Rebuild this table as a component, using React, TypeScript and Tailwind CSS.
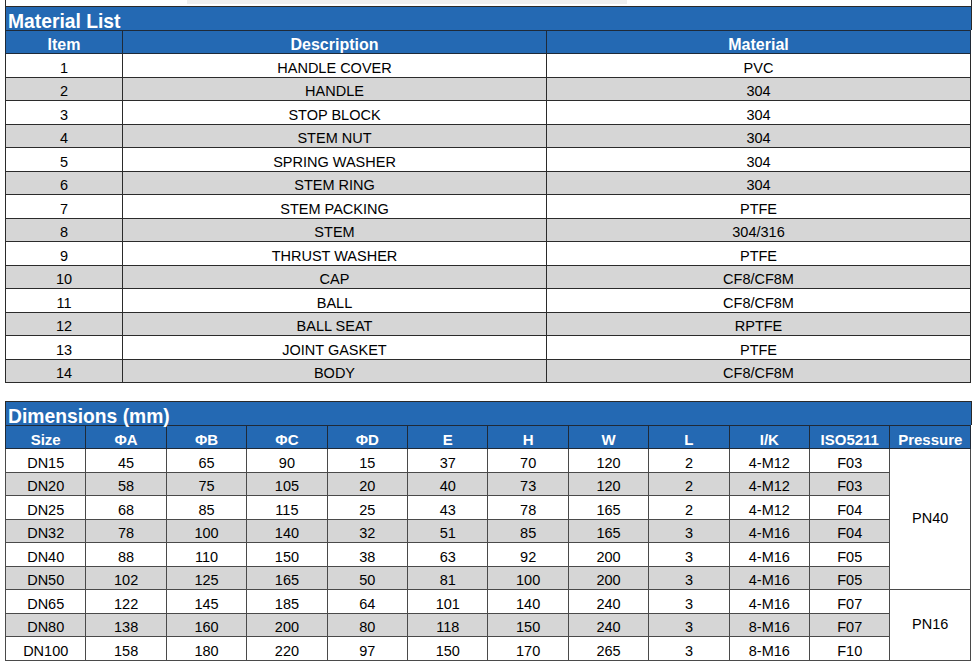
const materials = [
  ["1", "HANDLE COVER", "PVC"],
  ["2", "HANDLE", "304"],
  ["3", "STOP BLOCK", "304"],
  ["4", "STEM NUT", "304"],
  ["5", "SPRING WASHER", "304"],
  ["6", "STEM RING", "304"],
  ["7", "STEM PACKING", "PTFE"],
  ["8", "STEM", "304/316"],
  ["9", "THRUST WASHER", "PTFE"],
  ["10", "CAP", "CF8/CF8M"],
  ["11", "BALL", "CF8/CF8M"],
  ["12", "BALL SEAT", "RPTFE"],
  ["13", "JOINT GASKET", "PTFE"],
  ["14", "BODY", "CF8/CF8M"],
];

const dimHeaders = ["Size", "ΦA", "ΦB", "ΦC", "ΦD", "E", "H", "W", "L", "I/K", "ISO5211", "Pressure"];

const dims = [
  ["DN15", "45", "65", "90", "15", "37", "70", "120", "2", "4-M12", "F03"],
  ["DN20", "58", "75", "105", "20", "40", "73", "120", "2", "4-M12", "F03"],
  ["DN25", "68", "85", "115", "25", "43", "78", "165", "2", "4-M12", "F04"],
  ["DN32", "78", "100", "140", "32", "51", "85", "165", "3", "4-M16", "F04"],
  ["DN40", "88", "110", "150", "38", "63", "92", "200", "3", "4-M16", "F05"],
  ["DN50", "102", "125", "165", "50", "81", "100", "200", "3", "4-M16", "F05"],
  ["DN65", "122", "145", "185", "64", "101", "140", "240", "3", "4-M16", "F07"],
  ["DN80", "138", "160", "200", "80", "118", "150", "240", "3", "8-M16", "F07"],
  ["DN100", "158", "180", "220", "97", "150", "170", "265", "3", "8-M16", "F10"],
];

function Title({ text }: { text: string }) {
  return (
    <div className="h-[24px] bg-[#2469b3] border border-b-0 border-[#2a2a2a] flex items-end pl-[2px]">
      <span className="text-white font-bold text-[19.3px] leading-[16px]">{text}</span>
    </div>
  );
}

export default function App() {
  const cell = "h-[23.5px] align-bottom text-center text-[14.5px] leading-[16px] pb-[1px] text-black";

  return (
    <div className="w-[977px] h-[667px] bg-white overflow-hidden font-['Liberation_Sans',Arial,sans-serif]">
      <div className="px-[5px]">
        {/* tail of the block above */}
        <div className="h-[6px] border-x border-[#2a2a2a] pl-[181px]">
          <div className="w-[440px] h-[4px] bg-[#efefef]" />
        </div>

        {/* ================= MATERIAL LIST ================= */}
        <Title text="Material List" />
        <table className="w-[966px] table-fixed border-collapse">
          <colgroup>
            <col className="w-[117px]" />
            <col className="w-[424px]" />
            <col />
          </colgroup>
          <thead>
            <tr className="bg-[#2469b3]">
              {["Item", "Description", "Material"].map((h) => (
                <th
                  key={h}
                  className="h-[23px] align-bottom text-center text-white font-bold text-[16px] leading-[16px] pb-0 border border-[#1f2a38]"
                >
                  {h}
                </th>
              ))}
            </tr>
          </thead>
          <tbody>
            {materials.map((r, i) => (
              <tr key={r[0]} className={i % 2 ? "bg-[#d6d6d6]" : "bg-white"}>
                {r.map((c, j) => (
                  <td key={j} className={`${cell} border border-[#2b2b2b]`}>
                    {c}
                  </td>
                ))}
              </tr>
            ))}
          </tbody>
        </table>

        <div className="h-[18px]" />

        {/* ================= DIMENSIONS ================= */}
        <Title text="Dimensions (mm)" />
        <table className="w-[966px] table-fixed border-collapse">
          <thead>
            <tr className="bg-[#2469b3]">
              {dimHeaders.map((h) => (
                <th
                  key={h}
                  className="h-[23px] align-bottom text-center text-white font-bold text-[15px] leading-[16px] pb-0 border border-[#1f2a38]"
                >
                  {h}
                </th>
              ))}
            </tr>
          </thead>
          <tbody>
            {dims.map((r, i) => (
              <tr key={r[0]} className={i % 2 ? "bg-[#d6d6d6]" : "bg-white"}>
                {r.map((c, j) => (
                  <td key={j} className={`${cell} border border-[#4a4a4a]`}>
                    {c}
                  </td>
                ))}
                {i === 0 && (
                  <td
                    rowSpan={6}
                    className="bg-white border border-[#4a4a4a] text-center align-middle text-[14.5px] text-black"
                  >
                    PN40
                  </td>
                )}
                {i === 6 && (
                  <td
                    rowSpan={3}
                    className="bg-white border border-[#4a4a4a] text-center align-middle text-[14.5px] text-black"
                  >
                    PN16
                  </td>
                )}
              </tr>
            ))}
          </tbody>
        </table>
      </div>
    </div>
  );
}
